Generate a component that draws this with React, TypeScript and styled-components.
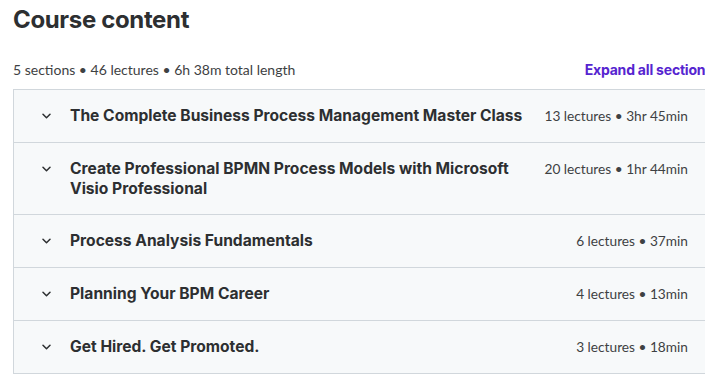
import React from "react";
import styled, { createGlobalStyle } from "styled-components";

const Global = createGlobalStyle`
  html, body { margin: 0; padding: 0; background: #ffffff; overflow: hidden; }
  body { font-family: Inter, "Noto Sans", sans-serif; color: #2d2f31; }
`;

const Page = styled.div`
  padding: 0 0 0 13px;
  width: 720px;
`;

const Wrapper = styled.div`
  width: 700px;
`;

const Heading = styled.h2`
  margin: 0;
  padding-top: 5px;
  font-size: 24px;
  line-height: 29px;
  font-weight: 700;
  letter-spacing: -0.35px;
  color: #2d2f31;
`;

const SummaryBar = styled.div`
  display: flex;
  justify-content: space-between;
  align-items: center;
  margin-top: 25px;
  margin-bottom: 10px;
  height: 20px;
`;

const Summary = styled.span`
  font-family: Lato, "Noto Sans", sans-serif;
  font-size: 14px;
  color: #3e4143;
`;

const ExpandLink = styled.button`
  border: 0;
  background: none;
  padding: 0;
  font: inherit;
  font-size: 14px;
  font-weight: 700;
  letter-spacing: -0.2px;
  color: #5624d0;
  cursor: pointer;
`;

const Panel = styled.div`
  border: 1px solid #d1d7dc;
  border-bottom: none;
`;

const Row = styled.div`
  display: flex;
  align-items: flex-start;
  padding: 16px 24px;
  background: #f7f9fa;
  border-bottom: 1px solid #d1d7dc;
`;

const Chevron = styled.span`
  display: flex;
  align-items: center;
  justify-content: center;
  width: 16px;
  height: 20px;
  margin-right: 16px;
  flex: none;
  color: #2d2f31;
`;

const Title = styled.span`
  flex: 0 1 auto;
  max-width: 470px;
  font-size: 15.6px;
  line-height: 19.5px;
  font-weight: 700;
  color: #2d2f31;
`;

const Meta = styled.span`
  margin-left: auto;
  padding-left: 16px;
  font-family: Lato, "Noto Sans", sans-serif;
  font-size: 13.7px;
  line-height: 20px;
  color: #3e4143;
  white-space: nowrap;
`;

const sections = [
  { title: "The Complete Business Process Management Master Class", meta: "13 lectures • 3hr 45min" },
  { title: "Create Professional BPMN Process Models with Microsoft Visio Professional", meta: "20 lectures • 1hr 44min" },
  { title: "Process Analysis Fundamentals", meta: "6 lectures • 37min" },
  { title: "Planning Your BPM Career", meta: "4 lectures • 13min" },
  { title: "Get Hired. Get Promoted.", meta: "3 lectures • 18min" },
];

const ChevronIcon = () => (
  <svg width="9" height="6" viewBox="0 0 9 6" fill="none">
    <path d="M1 1.2l3.5 3.5 3.5-3.5" stroke="currentColor" strokeWidth="1.5" strokeLinecap="round" strokeLinejoin="round" />
  </svg>
);

export default function App() {
  return (
    <>
      <Global />
      <Page>
        <Wrapper>
          <Heading>Course content</Heading>
          <SummaryBar>
            <Summary>5 sections • 46 lectures • 6h 38m total length</Summary>
            <ExpandLink>Expand all sections</ExpandLink>
          </SummaryBar>
          <Panel>
            {sections.map((s) => (
              <Row key={s.title}>
                <Chevron><ChevronIcon /></Chevron>
                <Title>{s.title}</Title>
                <Meta>{s.meta}</Meta>
              </Row>
            ))}
          </Panel>
        </Wrapper>
      </Page>
    </>
  );
}
